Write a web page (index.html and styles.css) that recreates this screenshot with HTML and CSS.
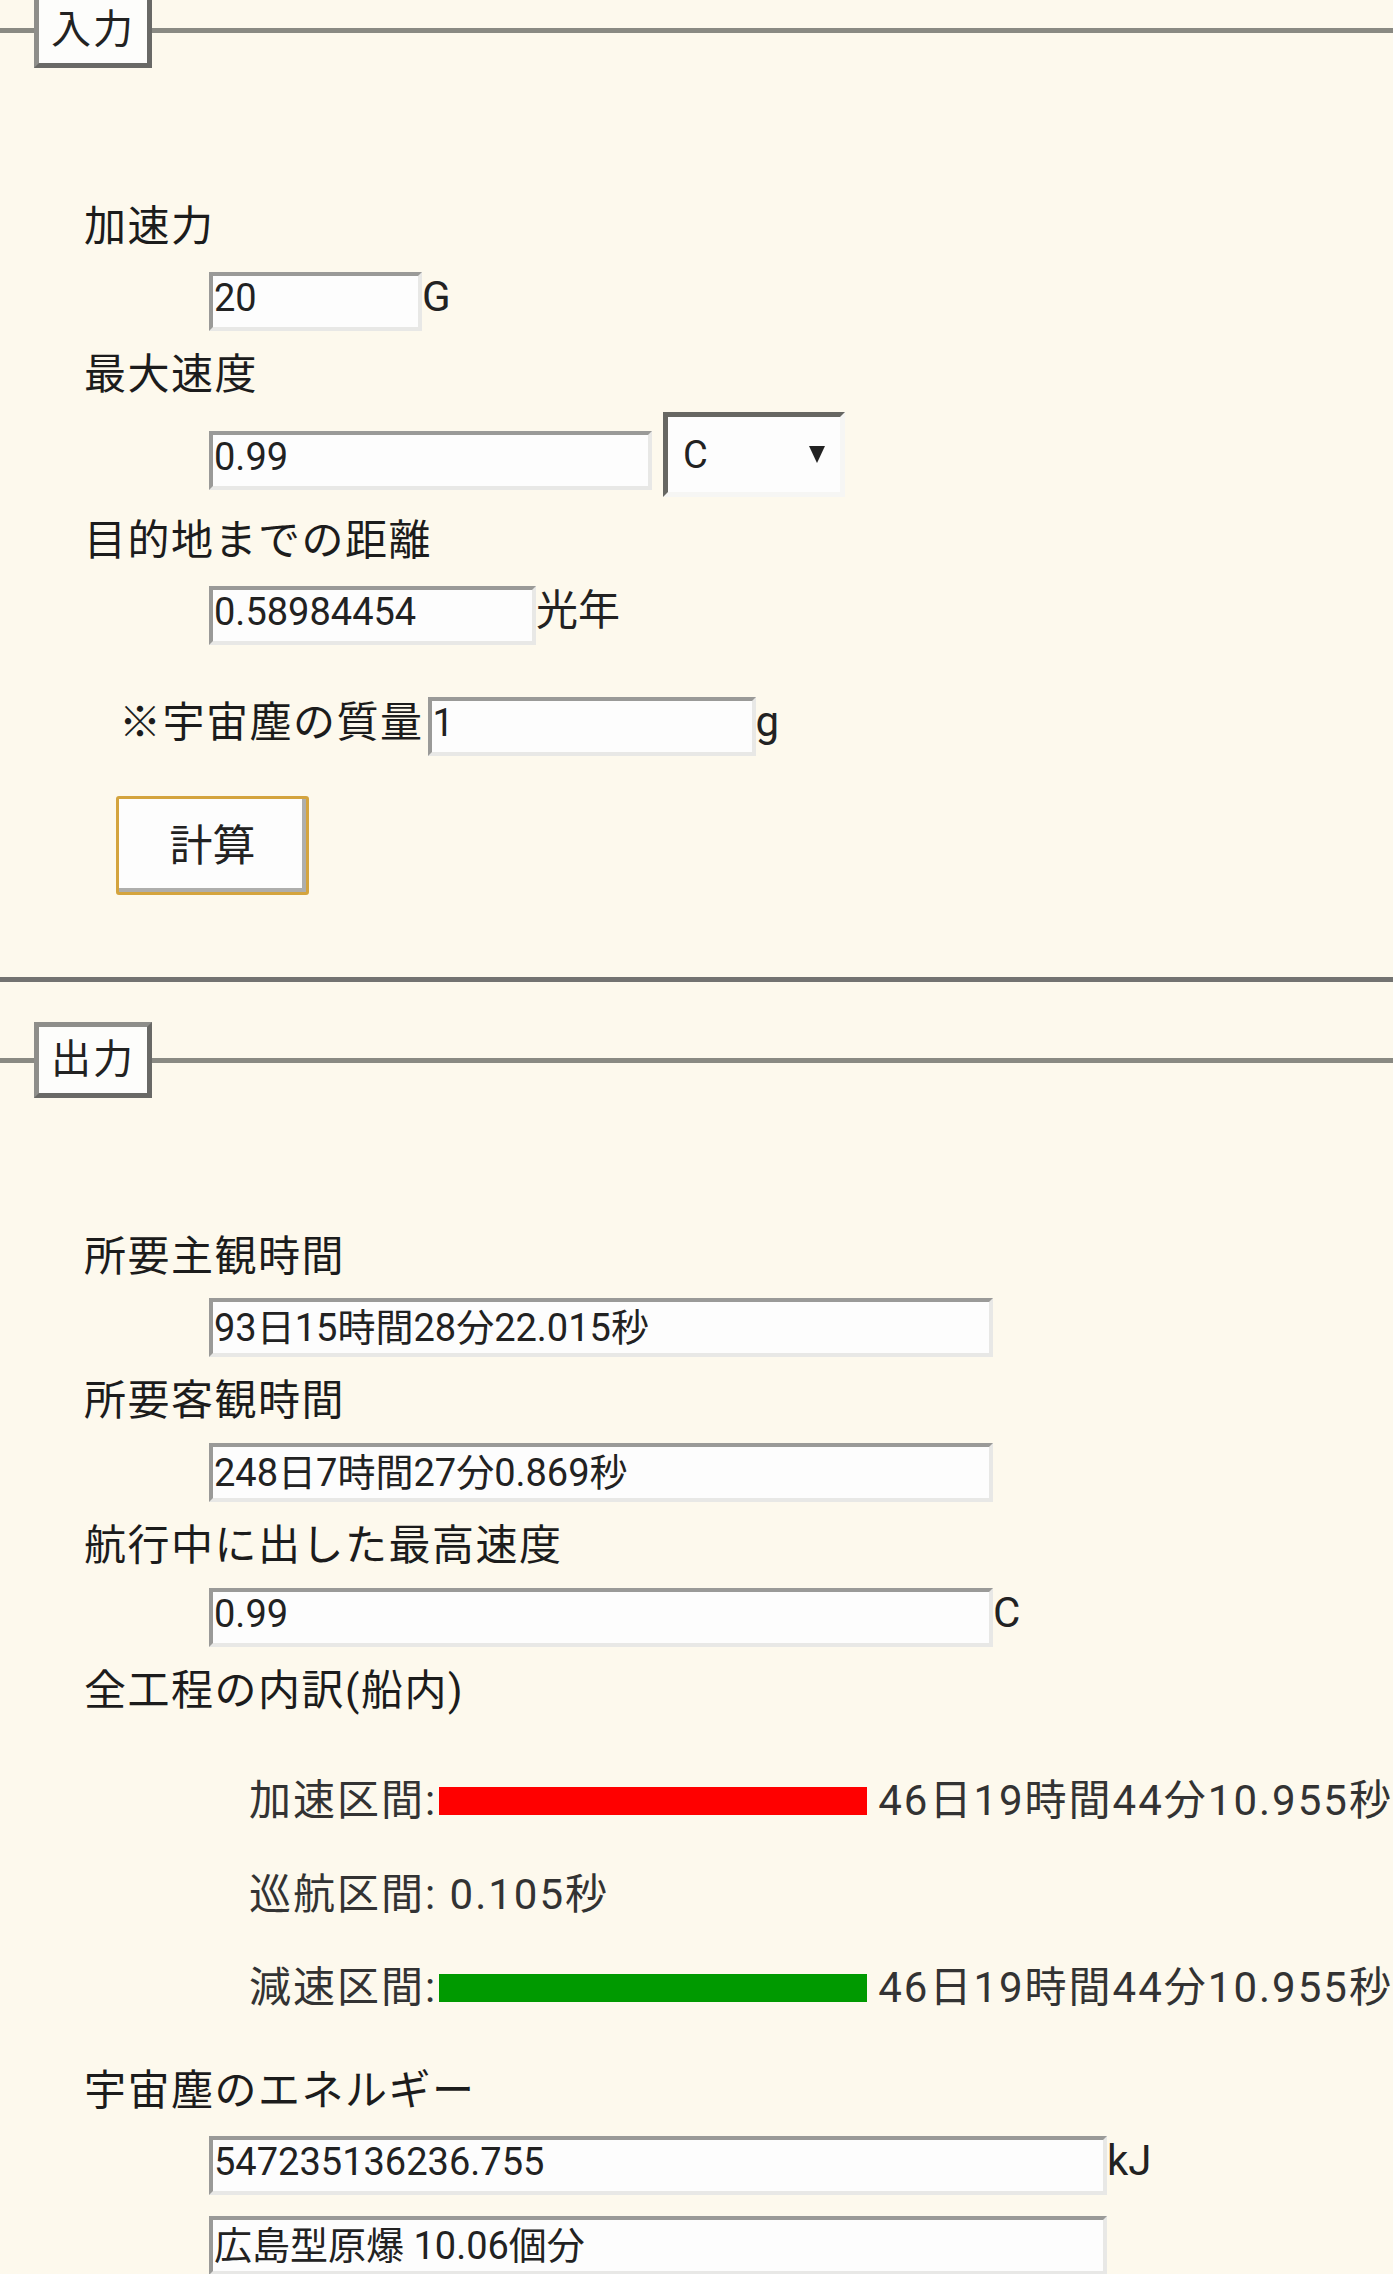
FILE: index.html
```html
<!DOCTYPE html>
<html lang="ja">
<head>
  <meta charset="UTF-8" />
  <meta name="viewport" content="width=device-width, initial-scale=1.0"/>
  <title>亜光速航行計算機</title>
  <link rel="stylesheet" href="styles.css">
</head>
<body>

  <!-- 入力 -->
  <fieldset class="panel panel-in">
    <legend>入力</legend>

    <div class="label first">加速力</div>
    <div class="row first">
      <input type="text" class="box w-accel" value="20"><span class="unit">G</span>
    </div>

    <div class="label">最大速度</div>
    <div class="row speed-row">
      <input type="text" class="box w-speed" value="0.99">
      <span class="select">
        <select>
          <option>C</option>
          <option>km/s</option>
        </select>
      </span>
    </div>

    <div class="label">目的地までの距離</div>
    <div class="row dist-row">
      <input type="text" class="box w-dist" value="0.58984454"><span class="unit">光年</span>
    </div>

    <div class="row mass-row">
      <span class="mass-label">※宇宙塵の質量</span><input type="text" class="box w-mass" value="1"><span class="unit">g</span>
    </div>

    <button type="button" class="calc">計算</button>
  </fieldset>

  <!-- 出力 -->
  <fieldset class="panel panel-out">
    <legend>出力</legend>

    <div class="label first">所要主観時間</div>
    <div class="row first">
      <input type="text" class="box w-out" value="93日15時間28分22.015秒" readonly>
    </div>

    <div class="label">所要客観時間</div>
    <div class="row">
      <input type="text" class="box w-out" value="248日7時間27分0.869秒" readonly>
    </div>

    <div class="label">航行中に出した最高速度</div>
    <div class="row">
      <input type="text" class="box w-out" value="0.99" readonly><span class="unit">C</span>
    </div>

    <div class="label">全工程の内訳(船内)</div>
    <div class="phases">
      <div class="phase">加速区間:<span class="bar accel" style="width: 428px"></span>46日19時間44分10.955秒</div>
      <div class="phase">巡航区間: 0.105秒</div>
      <div class="phase">減速区間:<span class="bar decel" style="width: 428px"></span>46日19時間44分10.955秒</div>
    </div>

    <div class="label energy">宇宙塵のエネルギー</div>
    <div class="row energy-row">
      <input type="text" class="box w-energy" value="547235136236.755" readonly><span class="unit">kJ</span>
    </div>
    <div class="row bomb-row">
      <input type="text" class="box w-energy" value="広島型原爆 10.06個分" readonly>
    </div>
  </fieldset>

</body>
</html>
```

FILE: styles.css
```css
body {
  margin: 0;
  padding: 0;
  background-color: #fdf9ed;
  color: #1c1c1c;
  font-family: Roboto, "Noto Sans CJK JP", sans-serif;
  overflow-x: hidden;
}

.panel {
  margin: 0;
  min-width: 0;
  border: none;
  border-top: 5px solid #8a8a83;
  padding: 129px 0 0 34px;
}

.panel-in {
  margin-top: -8px;
  padding-bottom: 82px;
  border-bottom: 5px solid #737371;
}

.panel-out {
  margin-top: 40px;
  padding-bottom: 40px;
}

legend {
  background-color: #fdfdfb;
  border: 5px solid;
  border-color: #8e8e8a #696966 #696966 #8e8e8a;
  padding: 4px 12px;
  font-size: 40px;
  line-height: 58px;
  letter-spacing: 2px;
  color: #222;
}

.label {
  margin: 14px 0 0 50px;
  font-size: 42px;
  line-height: 60px;
  letter-spacing: 1.5px;
  white-space: nowrap;
}

.label.first {
  margin-top: 0;
}

.row {
  display: flex;
  align-items: center;
  margin: 12px 0 0 175px;
  white-space: nowrap;
}

.panel-in .row.first {
  margin-top: 15px;
}

.panel-out .row.first {
  margin-top: 11px;
}

.unit {
  font-size: 42px;
  line-height: 50px;
  padding-bottom: 9px;
  color: #222;
}

.box {
  box-sizing: border-box;
  height: 59px;
  margin: 0;
  padding: 0 1px 7px;
  border: 4px solid;
  border-color: #9a9a98 #e8e8e6 #e8e8e6 #9a9a98;
  border-radius: 0;
  background-color: #fdfdfd;
  font-family: Roboto, "Noto Sans CJK JP", sans-serif;
  font-size: 38px;
  color: #222;
  outline: none;
}

.w-accel { width: 213px; }
.w-speed { width: 443px; }
.w-dist { width: 327px; }
.w-mass { width: 328px; }
.w-out { width: 784px; }
.w-energy { width: 898px; }

.speed-row {
  align-items: flex-start;
  margin-top: 7px;
}

.speed-row .box {
  margin-top: 19px;
}

.select {
  position: relative;
  box-sizing: border-box;
  width: 182px;
  height: 85px;
  margin-left: 11px;
  border: 5px solid;
  border-color: #676763 #f6f6f4 #f6f6f4 #676763;
  background-color: #fdfdfd;
}

.select select {
  appearance: none;
  -webkit-appearance: none;
  width: 100%;
  height: 100%;
  border: none;
  background: transparent;
  padding: 0 0 0 15px;
  font-family: Roboto, "Noto Sans CJK JP", sans-serif;
  font-size: 38px;
  color: #222;
  outline: none;
}

/* arrow of the unit picker */
.select::after {
  content: "";
  position: absolute;
  right: 15px;
  top: 29px;
  border-left: 8px solid transparent;
  border-right: 8px solid transparent;
  border-top: 17px solid #222;
  pointer-events: none;
}

.dist-row {
  margin-top: 15px;
}

.mass-row {
  margin: 52px 0 0 85px;
}

.mass-label {
  font-size: 42px;
  line-height: 51px;
  padding-bottom: 8px;
  letter-spacing: 1.5px;
  margin-right: 4px;
}

.calc {
  display: block;
  box-sizing: border-box;
  width: 193px;
  height: 99px;
  margin: 40px 0 0 82px;
  padding: 0 0 7px;
  border: 3px solid #d4a43e;
  border-radius: 3px;
  background-color: #fdfdfd;
  box-shadow: inset -4px -4px 0 #aeaeac;
  font-family: Roboto, "Noto Sans CJK JP", sans-serif;
  font-size: 43px;
  color: #222;
  cursor: pointer;
}

.phases {
  display: flex;
  flex-direction: column;
  gap: 33.5px;
  margin: 50px 0 0 215px;
}

.phase {
  display: flex;
  align-items: center;
  font-size: 42px;
  line-height: 60px;
  letter-spacing: 2px;
  color: #333;
  white-space: nowrap;
}

.bar {
  display: inline-block;
  height: 28px;
  margin: 0 11px 0 2px;
  flex-shrink: 0;
}

.bar.accel {
  background-color: #ff0000;
}

.bar.decel {
  background-color: #009a00;
}

.label.energy {
  margin-top: 43px;
}

.energy-row {
  margin-top: 15px;
}

.bomb-row {
  margin-top: 21px;
}
```
